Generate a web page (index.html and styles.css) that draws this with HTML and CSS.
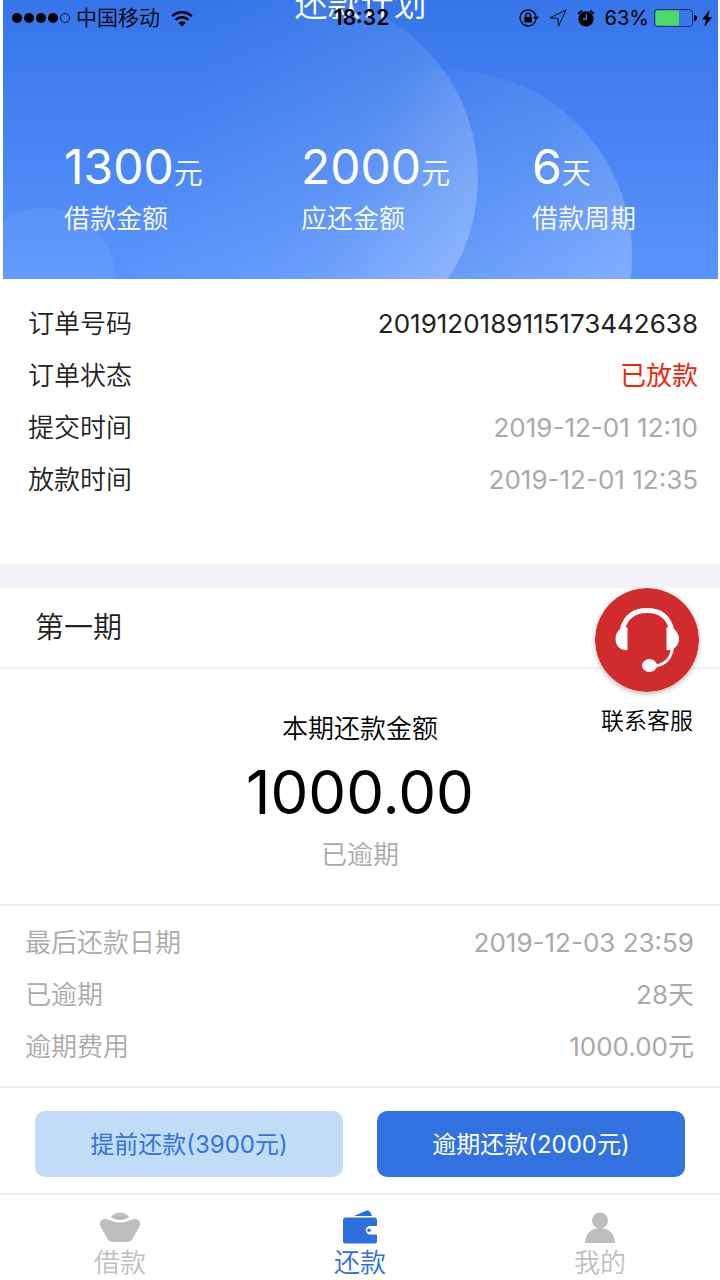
FILE: index.html
```html
<!DOCTYPE html>
<html lang="zh-CN">
<head>
  <meta charset="UTF-8" />
  <meta name="viewport" content="width=device-width, initial-scale=1.0"/>
  <title>还款计划</title>
  <link rel="stylesheet" href="styles.css">
</head>
<body>

  <!-- Status bar -->
  <div class="status-bar">
    <div class="status-left">
      <svg class="signal" width="60" height="12" viewBox="0 0 60 12">
        <circle cx="6" cy="6" r="5"/><circle cx="18" cy="6" r="5"/><circle cx="30" cy="6" r="5"/><circle cx="42" cy="6" r="5"/>
        <circle cx="54" cy="6" r="4.5" fill="none" stroke="#000" stroke-width="0.8"/>
      </svg>
      <span>中国移动</span>
      <svg class="wifi" width="22" height="17" viewBox="0 0 22 17" fill="none" stroke="#000" stroke-width="2.4">
        <path d="M1.2 6.2a14 14 0 0 1 19.6 0"/>
        <path d="M4.6 9.8a9.2 9.2 0 0 1 12.8 0"/>
        <path d="M11 16.5L7.2 12.7a5.4 5.4 0 0 1 7.6 0z" fill="#000" stroke="none"/>
      </svg>
    </div>
    <div class="status-time">18:32</div>
    <div class="status-right">
      <svg width="20" height="18" viewBox="0 0 20 18">
        <path d="M16.6 11.6A8 8 0 1 1 17 8" fill="none" stroke="#000" stroke-width="1.3"/>
        <path d="M14 7.8h6l-3 3.6z"/>
        <rect x="5.3" y="8" width="7.6" height="5.6" rx="0.6"/>
        <path d="M6.8 8.2V6.4a2.3 2.3 0 0 1 4.6 0v1.8" fill="none" stroke="#000" stroke-width="1.3"/>
      </svg>
      <svg width="18" height="18" viewBox="0 0 18 18">
        <path d="M17 1L1 8.8l7.8.6L9.6 17z" fill="none" stroke="#000" stroke-width="0.9" stroke-linejoin="round"/>
      </svg>
      <svg width="18" height="18" viewBox="0 0 18 18">
        <circle cx="9" cy="9.8" r="7.6"/>
        <path d="M1.200 4.800L5 1.600M16.800 4.800L13 1.600" fill="none" stroke="#000" stroke-width="2"/>
        <path d="M9.400 5v5H6" fill="none" stroke="#3c7ce9" stroke-width="1.3"/>
      </svg>
      <span class="percent">63%</span>
      <svg width="43" height="18" viewBox="0 0 43 18">
        <rect x="0.5" y="0.5" width="38" height="17" rx="3" fill="none" stroke="#0d2f70"/>
        <path d="M3.5 1.5H25v15H3.5a2 2 0 0 1-2-2v-11a2 2 0 0 1 2-2z" fill="#4cd964"/>
        <path d="M40 6a3 3 0 0 1 0 6z"/>
      </svg>
      <svg class="bolt" width="10" height="17" viewBox="0 0 10 17"><path d="M7.6 0L0 9.4h4L2.4 17 10 7.2H6z"/></svg>
    </div>
  </div>

  <header class="header">
    <svg class="bubbles" viewBox="0 0 715 279" preserveAspectRatio="xMidYMin slice">
      <defs>
        <linearGradient id="fade" x1="0.1" y1="0.3" x2="1" y2="0.65">
          <stop offset="0.1" stop-color="#fff" stop-opacity="0"/>
          <stop offset="0.65" stop-color="#fff" stop-opacity="0.09"/>
          <stop offset="1" stop-color="#fff" stop-opacity="0.25"/>
        </linearGradient>
        <linearGradient id="fade-soft" x1="0.2" y1="0.1" x2="1" y2="0.6">
          <stop offset="0.05" stop-color="#fff" stop-opacity="0"/>
          <stop offset="0.55" stop-color="#fff" stop-opacity="0.09"/>
          <stop offset="1" stop-color="#fff" stop-opacity="0.25"/>
        </linearGradient>
      </defs>
      <circle cx="290" cy="178" r="185" fill="url(#fade)"/>
      <circle cx="444" cy="255" r="185" fill="url(#fade-soft)"/>
      <circle cx="41" cy="280" r="72" fill="#fff" fill-opacity="0.06"/>
    </svg>
    <h1 class="title">还款计划</h1>
    <div class="stats">
      <div class="stat">
        <div class="stat-value">1300<span>元</span></div>
        <div class="stat-label">借款金额</div>
      </div>
      <div class="stat">
        <div class="stat-value">2000<span>元</span></div>
        <div class="stat-label">应还金额</div>
      </div>
      <div class="stat">
        <div class="stat-value">6<span>天</span></div>
        <div class="stat-label">借款周期</div>
      </div>
    </div>
  </header>

  <!-- Order info -->
  <dl class="rows order">
    <div class="row"><dt>订单号码</dt><dd class="dark">2019120189115173442638</dd></div>
    <div class="row"><dt>订单状态</dt><dd class="red">已放款</dd></div>
    <div class="row"><dt>提交时间</dt><dd>2019-12-01 12:10</dd></div>
    <div class="row"><dt>放款时间</dt><dd>2019-12-01 12:35</dd></div>
  </dl>

  <!-- Current period -->
  <section class="period">
    <h2 class="period-title">第一期</h2>
    <a class="service" href="#">
      <svg class="service-icon" width="104" height="104" viewBox="0 0 104 104">
        <circle cx="52" cy="52" r="52" fill="#d12c2d"/>
        <path d="M27.500 41C31 28 40 22.500 52 22.500S73 28 76.500 41" fill="none" stroke="#fff" stroke-width="5"/>
        <path d="M32.500 39.500v22.500q-4 .5-6.500-1c-3.500-2-5.500-5.500-5.500-10s2-8.500 5.500-11q2.500-1.500 6.500-.5z" fill="#fff"/>
        <path d="M71.500 39.500v22.500q4 .5 6.500-1c3.500-2 6-5.500 6-10s-2.500-8.500-6-11q-2.500-1.500-6.500-.5z" fill="#fff"/>
        <path d="M77.500 60C76 71 69 78 57 78" fill="none" stroke="#fff" stroke-width="3"/>
        <ellipse cx="54.500" cy="77.500" rx="7.500" ry="6.500" fill="#fff"/>
      </svg>
      <span>联系客服</span>
    </a>
    <div class="amount">
      <div class="amount-label">本期还款金额</div>
      <div class="amount-value">1000.00</div>
      <div class="amount-state">已逾期</div>
    </div>
    <dl class="rows detail">
      <div class="row"><dt>最后还款日期</dt><dd>2019-12-03 23:59</dd></div>
      <div class="row"><dt>已逾期</dt><dd>28天</dd></div>
      <div class="row"><dt>逾期费用</dt><dd>1000.00元</dd></div>
    </dl>
    <div class="actions">
      <button type="button" class="btn btn-light">提前还款(3900元)</button>
      <button type="button" class="btn btn-primary">逾期还款(2000元)</button>
    </div>
  </section>

  <nav class="tabs">
    <a class="tab" href="#">
      <svg width="42" height="34" viewBox="0 0 42 34" fill="currentColor">
        <path d="M12 7.500C14 4 17 2.500 21 2.500S28 4 30 7.500Q25.500 10 21 10T12 7.500z"/>
        <path d="M6 9C10 9 14 12.500 21 12.500S32 9 36 9c4 0 6.500 4 4.500 7.500L33.500 29q-1.500 3-4 3h-17q-2.500 0-4-3L1.500 16.500C-.5 13 2 9 6 9z"/>
      </svg>
      <span>借款</span>
    </a>
    <a class="tab active" href="#">
      <svg width="36" height="34" viewBox="0 0 36 34" fill="currentColor">
        <path d="M12 6L24 .8q3-1 4.500 1.700L30 6z"/>
        <path d="M3.500 7.500h29q2.500 0 2.500 2.500v6h-7a4.200 4.200 0 0 0 0 8.400h7V31q0 2.500-2.500 2.500h-29Q1 33.500 1 31V10q0-2.500 2.500-2.500z"/>
        <circle cx="27" cy="20.200" r="1.800"/>
      </svg>
      <span>还款</span>
    </a>
    <a class="tab" href="#">
      <svg width="32" height="34" viewBox="0 0 32 34" fill="currentColor">
        <circle cx="16" cy="10.500" r="8"/>
        <path d="M1 33C1 24 7.500 18 16 18s15 6 15 15z"/>
      </svg>
      <span>我的</span>
    </a>
  </nav>

</body>
</html>
```

FILE: styles.css
```css
* { box-sizing: border-box; }
body { margin: 0; position: relative; background: #fff; color: #222; font-family: Inter, "Noto Sans CJK SC", sans-serif; font-size: 26px; font-weight: 350; }
h1, h2, dl, dd { margin: 0; font-weight: inherit; }
a { color: inherit; text-decoration: none; }
svg { display: block; flex: none; }

.status-bar { position: absolute; top: 0; left: 0; right: 0; z-index: 2; height: 36px; padding: 0 8px 0 11px; display: grid; grid-template-columns: 1fr auto 1fr; align-items: center; color: #000; font-size: 21px; line-height: 36px; }
.status-left, .status-right { display: flex; align-items: center; }
.status-left { gap: 5px; }
.status-left .wifi { margin-left: 6px; }
.status-right { justify-content: flex-end; gap: 10px; }
.status-right .percent { margin-right: -5px; font-size: 20px; font-weight: 400; }
.status-right .bolt { margin-left: -5px; }
.status-time { font-weight: 600; }

.header { position: relative; overflow: hidden; margin: 0 2px 0 3px; padding-bottom: 40px; background: linear-gradient(#3575e8, #5a94fd); color: #fff; }
.bubbles { position: absolute; top: 0; left: 0; width: 100%; height: 100%; }
.title { position: relative; margin-top: -20px; font-size: 33px; line-height: 48px; text-align: center; }
.stats { position: relative; display: grid; grid-template-columns: 237fr 231fr 186fr; padding: 107px 0 0 61px; }
.stat-value { font-size: 48px; font-weight: 400; line-height: 64px; white-space: nowrap; }
.stat-value span { font-size: 29px; font-weight: 350; line-height: 29px; }
.stat-label { line-height: 40px; }

.rows .row { display: flex; justify-content: space-between; align-items: center; line-height: 52px; }
.rows dd { color: #a9a9a9; font-weight: 400; }
.rows .dark { color: #222; }
.rows .red { color: #e8290b; }
.order { padding: 19px 22px 58px 28px; }

.period { position: relative; border-top: 24px solid #f2f2f8; }
.period-title { padding: 0 35px; font-size: 29px; line-height: 79px; border-bottom: 2px solid #eee; }
.service { position: absolute; top: 0; right: 21px; display: flex; flex-direction: column; align-items: center; gap: 12px; color: #000; font-size: 23px; line-height: 34px; }
.service-icon { border-radius: 50%; box-shadow: 0 2px 5px #bbb; }
.amount { padding: 38px 0 27px; text-align: center; color: #000; border-bottom: 2px solid #eee; }
.amount-label { line-height: 44px; }
.amount-value { font-size: 60px; font-weight: 400; line-height: 82px; }
.amount-state { line-height: 44px; color: #a9a9a9; }
.detail { padding: 11px 26px 13px 25px; color: #a9a9a9; border-bottom: 2px solid #eee; }
.actions { display: flex; gap: 34px; padding: 23px 35px 16px; }
.btn { flex: 1; height: 66px; padding: 0 0 3px; border: none; border-radius: 10px; font: inherit; font-size: 24px; font-weight: 400; cursor: pointer; }
.btn-light { background: #c1dcf6; color: #3572dc; }
.btn-primary { background: #3272df; color: #fff; }

.tabs { display: grid; grid-template-columns: repeat(3, 1fr); padding-top: 15px; border-top: 2px solid #eee; }
.tab { display: flex; flex-direction: column; align-items: center; color: #bebebe; line-height: 37px; }
.tab.active { color: #2e6fe0; }
```
